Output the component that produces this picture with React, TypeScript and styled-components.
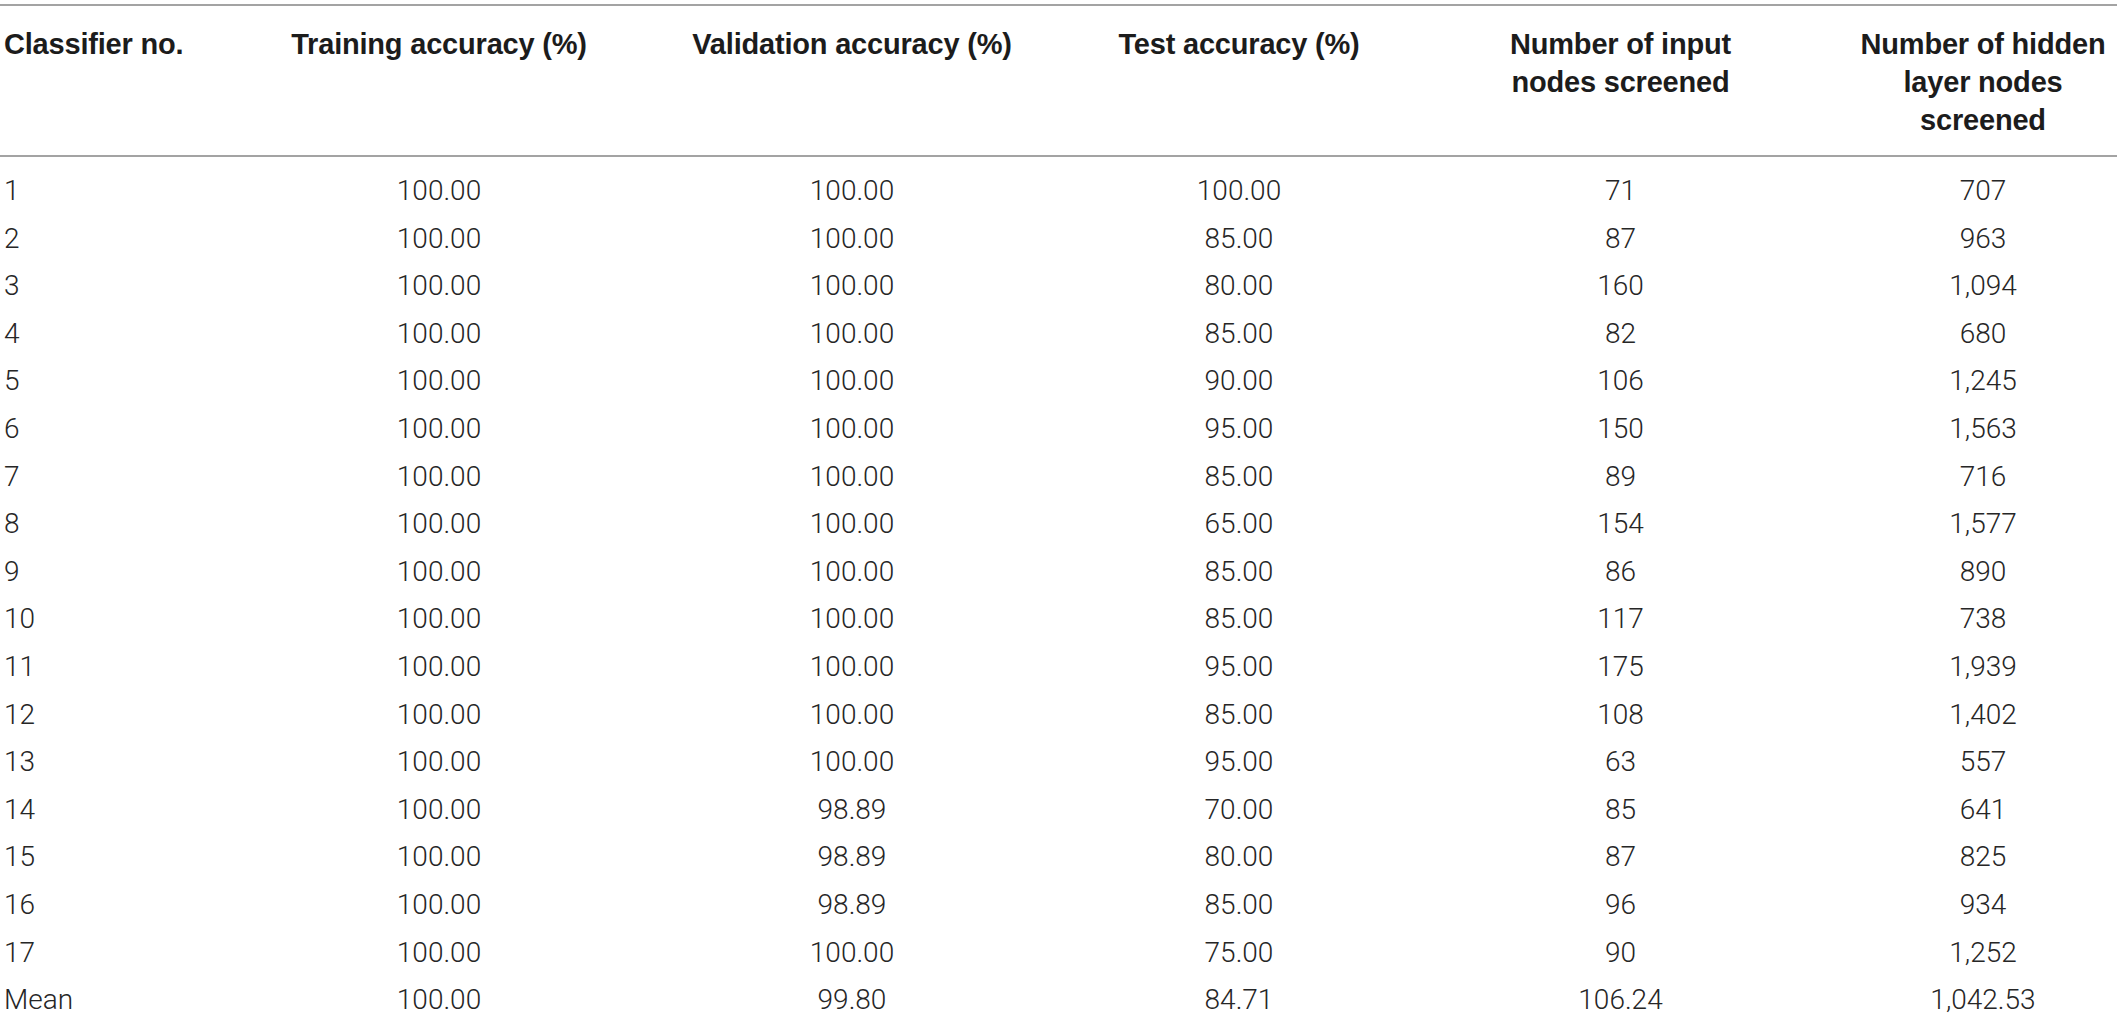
import React, { FC } from 'react'
import styled, { createGlobalStyle } from 'styled-components'

type Row = [string, string, string, string, string, string]

const rows: Row[] = [
  ['1', '100.00', '100.00', '100.00', '71', '707'],
  ['2', '100.00', '100.00', '85.00', '87', '963'],
  ['3', '100.00', '100.00', '80.00', '160', '1,094'],
  ['4', '100.00', '100.00', '85.00', '82', '680'],
  ['5', '100.00', '100.00', '90.00', '106', '1,245'],
  ['6', '100.00', '100.00', '95.00', '150', '1,563'],
  ['7', '100.00', '100.00', '85.00', '89', '716'],
  ['8', '100.00', '100.00', '65.00', '154', '1,577'],
  ['9', '100.00', '100.00', '85.00', '86', '890'],
  ['10', '100.00', '100.00', '85.00', '117', '738'],
  ['11', '100.00', '100.00', '95.00', '175', '1,939'],
  ['12', '100.00', '100.00', '85.00', '108', '1,402'],
  ['13', '100.00', '100.00', '95.00', '63', '557'],
  ['14', '100.00', '98.89', '70.00', '85', '641'],
  ['15', '100.00', '98.89', '80.00', '87', '825'],
  ['16', '100.00', '98.89', '85.00', '96', '934'],
  ['17', '100.00', '100.00', '75.00', '90', '1,252'],
  ['Mean', '100.00', '99.80', '84.71', '106.24', '1,042.53'],
]

const columnWidths = [260, 358, 468, 306, 457, 268]

const GlobalStyle = createGlobalStyle`
  html, body {
    margin: 0;
    padding: 0;
    background: #fff;
  }
`

const App: FC = () => (
  <>
    <GlobalStyle />
    <Page>
      <ResultsTable>
        <colgroup>
          {columnWidths.map((w, i) => (
            <col key={i} style={{ width: w }} />
          ))}
        </colgroup>
        <thead>
          <tr>
            <HeadCell $left>Classifier no.</HeadCell>
            <HeadCell>Training accuracy (%)</HeadCell>
            <HeadCell>Validation accuracy (%)</HeadCell>
            <HeadCell>Test accuracy (%)</HeadCell>
            <HeadCell>
              Number of input
              <br />
              nodes screened
            </HeadCell>
            <HeadCell>
              Number of hidden
              <br />
              layer nodes
              <br />
              screened
            </HeadCell>
          </tr>
        </thead>
        <tbody>
          {rows.map((row) => (
            <BodyRow key={row[0]}>
              {row.map((value, i) => (
                <BodyCell key={i} $left={i === 0}>
                  {value}
                </BodyCell>
              ))}
            </BodyRow>
          ))}
        </tbody>
      </ResultsTable>
    </Page>
  </>
)

export default App

const Page = styled.div`
  width: 2117px;
  padding-top: 4px;
`

const ResultsTable = styled.table`
  width: 2117px;
  table-layout: fixed;
  border-collapse: collapse;
  border-top: 2px solid #a3a3a3;
  color: #262626;
`

const HeadCell = styled.th<{ $left?: boolean }>`
  font-family: 'Liberation Sans', Arial, sans-serif;
  font-size: 29px;
  font-weight: bold;
  line-height: 38px;
  letter-spacing: -0.2px;
  color: #1c1c1c;
  text-align: ${(p) => (p.$left ? 'left' : 'center')};
  vertical-align: top;
  padding: 19px 0 16px ${(p) => (p.$left ? '4px' : '0')};
  border-bottom: 2px solid #a3a3a3;
`

const BodyRow = styled.tr`
  &:first-child td {
    padding-top: 17px;
  }
`

const BodyCell = styled.td<{ $left?: boolean }>`
  font-family: Roboto, 'Liberation Sans', sans-serif;
  font-size: 28px;
  font-weight: 300;
  line-height: 34px;
  text-align: ${(p) => (p.$left ? 'left' : 'center')};
  padding: 6.8px 0 6.8px ${(p) => (p.$left ? '4px' : '0')};
  white-space: nowrap;
`
